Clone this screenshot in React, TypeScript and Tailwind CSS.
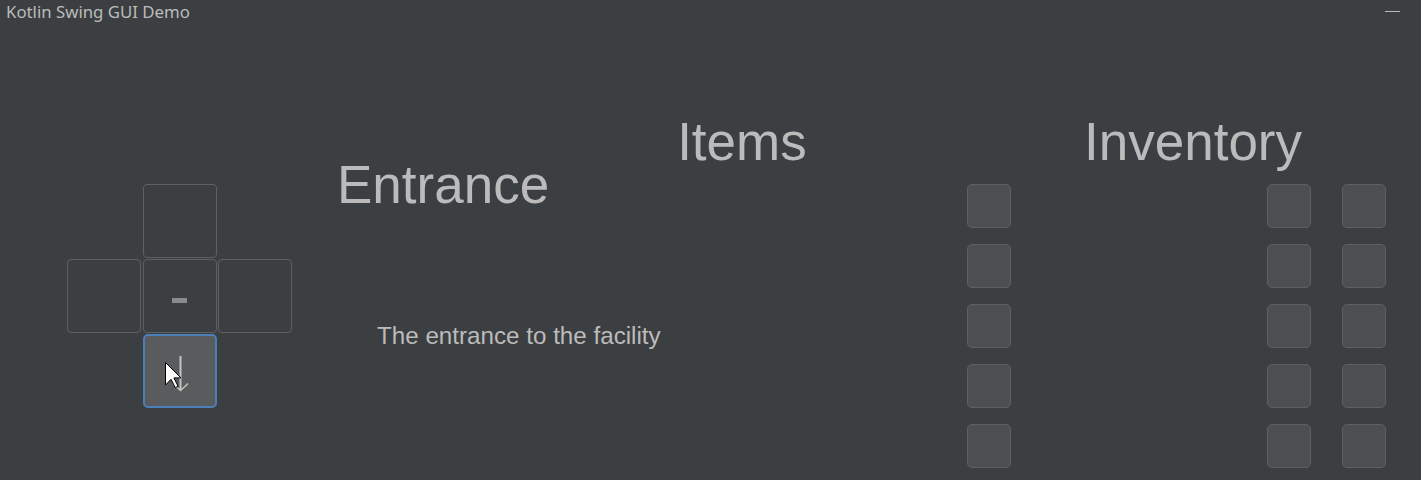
import React from "react";

const big = { fontFamily: '"Liberation Sans", Arial, sans-serif' };

function NavButton({ children, active }: { children?: React.ReactNode; active?: boolean }) {
  return (
    <div
      className={
        "w-[74px] h-[74px] rounded-[4px] flex items-center justify-center relative " +
        (active ? "bg-[#595b5d] border-2 border-[#4a7fb8] rounded-[5px]" : "border border-[#5e6062]")
      }
    >
      {children}
    </div>
  );
}

function Slot() {
  return <div className="w-[44px] h-[44px] rounded-[5px] border border-[#5d5f61] bg-[#4c4e50]" />;
}

export default function App() {
  return (
    <div className="w-[1421px] h-[480px] bg-[#3c3f41] overflow-hidden text-[#bbbbbb]">
      {/* Title bar */}
      <div className="h-[26px] flex items-start justify-between">
        <span className="pl-[6px] pt-[1px] text-[16.8px] leading-[22px]" style={{ fontFamily: '"Noto Sans", "Open Sans", sans-serif' }}>
          Kotlin Swing GUI Demo
        </span>
        <div className="w-[15px] h-px bg-[#bbbbbb] mt-[11px] mr-[21px]" />
      </div>

      <div className="flex" style={big}>
        {/* Direction buttons */}
        <div className="w-[338px] shrink-0 pl-[67px] pt-[158px]">
          <div className="grid grid-cols-[74px_74px_74px] gap-x-[1.5px] gap-y-px">
            <div />
            <NavButton />
            <div />
            <NavButton />
            <NavButton>
              <div className="w-[15px] h-[5px] bg-[#8a8a8a] mt-[8px]" />
            </NavButton>
            <NavButton />
            <div />
            <NavButton active>
              <svg width="70" height="70" viewBox="0 0 70 70" className="absolute inset-0">
                <line x1="35.5" y1="20" x2="35.5" y2="54" stroke="#c4c4c4" strokeWidth="2" />
                <path d="M28 47.5 L35.5 54.5 L43 47.5" fill="none" stroke="#c4c4c4" strokeWidth="1.5" />
                <path
                  d="M20.5 26.5 L20.5 49 L26 43.3 L30.3 51.7 L33.1 50.3 L28.9 41.9 L36 41.9 Z"
                  fill="#ffffff"
                  stroke="#000000"
                  strokeWidth="1"
                  strokeLinejoin="miter"
                />
              </svg>
            </NavButton>
            <div />
          </div>
        </div>

        {/* Room */}
        <div className="w-[629px] shrink-0 flex flex-col">
          <div className="flex items-start">
            <h1 className="mt-[132px] -ml-[1px] text-[53px] leading-[53px]">Entrance</h1>
            <h2 className="ml-[128px] mt-[89px] text-[53px] leading-[53px]">Items</h2>
          </div>
          <p className="ml-[39px] mt-[113px] text-[24.2px] leading-[24px]">The entrance to the facility</p>
        </div>

        {/* Room items */}
        <div className="pt-[158px] flex flex-col gap-[16px]">
          <Slot />
          <Slot />
          <Slot />
          <Slot />
          <Slot />
        </div>

        {/* Inventory */}
        <div className="flex-1 flex flex-col">
          <h2 className="ml-[73px] mt-[89px] text-[53px] leading-[53px]">Inventory</h2>
          <div className="ml-[256px] mt-[16px] grid grid-cols-[44px_44px] gap-x-[31px] gap-y-[16px]">
            {Array.from({ length: 10 }).map((_, i) => (
              <Slot key={i} />
            ))}
          </div>
        </div>
      </div>
    </div>
  );
}
